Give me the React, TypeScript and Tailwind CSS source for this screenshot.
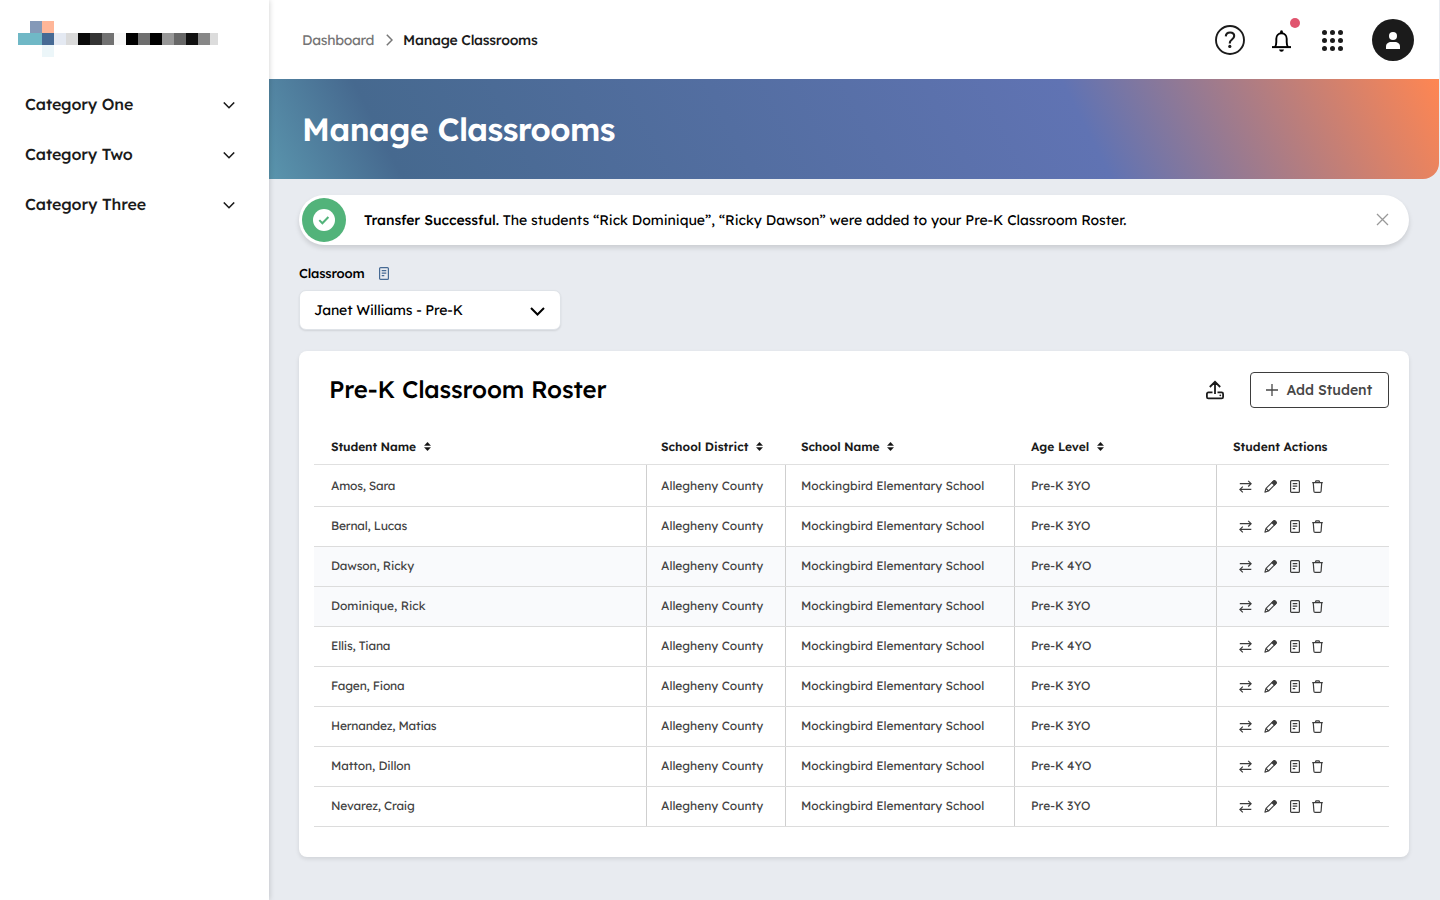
import React from "react";

const logoRow = [
  "bg-[#70b8c6]", "bg-[#70b8c6]", "bg-[#466a94]", "bg-[#e4e9f2]", "bg-[#dadada]", "bg-[#0a0a0a]",
  "bg-[#343434]", "bg-[#717171]", "bg-[#f7f7f7]", "bg-[#000000]", "bg-[#6e6e6e]", "bg-[#000000]",
  "bg-[#979797]", "bg-[#676767]", "bg-[#111111]", "bg-[#878787]",
];

const categories = [
  { label: "Category One", track: "tracking-[-0.15px]" },
  { label: "Category Two", track: "tracking-[-0.15px]" },
  { label: "Category Three", track: "tracking-[-0.12px]" },
];

const students = [
  { name: "Amos, Sara", age: "Pre-K 3YO", track: "tracking-[-0.22px]" },
  { name: "Bernal, Lucas", age: "Pre-K 3YO", track: "tracking-[-0.2px]" },
  { name: "Dawson, Ricky", age: "Pre-K 4YO", track: "tracking-[-0.13px]", added: true },
  { name: "Dominique, Rick", age: "Pre-K 3YO", track: "tracking-normal", added: true },
  { name: "Ellis, Tiana", age: "Pre-K 4YO", track: "tracking-[-0.2px]" },
  { name: "Fagen, Fiona", age: "Pre-K 3YO", track: "tracking-[-0.2px]" },
  { name: "Hernandez, Matias", age: "Pre-K 3YO", track: "tracking-[-0.22px]" },
  { name: "Matton, Dillon", age: "Pre-K 4YO", track: "tracking-[-0.1px]" },
  { name: "Nevarez, Craig", age: "Pre-K 3YO", track: "tracking-[-0.18px]" },
];

const columns = "grid grid-cols-[333px_139px_229px_202px_172px]";

function Logo() {
  return (
    <div className="ml-[18px] mt-[21px] w-[200px]">
      <div className="flex pl-3">
        <div className="size-3 bg-[#8499b8]" />
        <div className="size-3 bg-[#ffb698]" />
      </div>
      <div className="flex">
        {logoRow.map((c, i) => (
          <div key={i} className={"size-3 " + c} />
        ))}
        <div className="h-3 w-2 bg-[#dcdcdc]" />
      </div>
      <div className="ml-6 size-3 bg-[#ecf6f9]" />
    </div>
  );
}

function Chevron() {
  return (
    <svg className="h-[7px] w-[12px]" viewBox="0 0 12 7" fill="none" stroke="#1b1b1b" strokeWidth="1.6">
      <path d="M.8.5 6 5.7 11.2.5" />
    </svg>
  );
}

function Sorter() {
  return (
    <svg className="mb-px h-[9px] w-[7px]" viewBox="0 0 7 9" fill="#111">
      <path d="M3.5.2 6.5 3.5H.5ZM3.5 8.8.5 5.5h6Z" stroke="#111" strokeWidth=".4" strokeLinejoin="round" />
    </svg>
  );
}

function NoteIcon({ color }: { color: string }) {
  return (
    <svg className="h-[13px] w-[10px]" viewBox="0 0 10 13" fill="none" stroke={color}>
      <rect x=".6" y=".6" width="8.8" height="11.8" rx="1" strokeWidth="1.2" />
      <path d="M2.7 3.6h4.6M2.7 6.1h4.6M2.7 8.6h2.6" strokeWidth="1.1" />
    </svg>
  );
}

function SwapIcon() {
  return (
    <svg className="h-[13px] w-[13px]" viewBox="0 0 13 13" fill="none" stroke="#3d3d3d" strokeWidth="1.2">
      <path d="M.8 3.7h11M9.2.8l2.9 2.9-2.9 2.8M12.3 9.4h-11M3.8 6.6.9 9.4l2.9 2.9" />
    </svg>
  );
}

function PencilIcon() {
  return (
    <svg className="h-[13px] w-[13px]" viewBox="0 0 13 13" fill="none" stroke="#3d3d3d" strokeWidth="1.1" strokeLinejoin="round">
      <path d="M.9 12.1 2 8.4 9.4 1.2a1.2 1.2 0 0 1 1.7 0l.7.7a1.2 1.2 0 0 1 0 1.7L4.5 11ZM2.2 8.5l2.2 2.3" />
      <path d="M7.9 2.7 9.6 1a1.1 1.1 0 0 1 1.5 0l.9.9a1.1 1.1 0 0 1 0 1.5l-1.6 1.7Z" fill="#3d3d3d" />
    </svg>
  );
}

function TrashIcon() {
  return (
    <svg className="h-[13px] w-[11px]" viewBox="0 0 11 13" fill="none" stroke="#3d3d3d" strokeWidth="1.2" strokeLinejoin="round">
      <path d="M.2 2.7h10.6M3.3 2.5 4 .8h3l.7 1.7M1.3 2.9l.6 8.3q.1 1.2 1.2 1.2h4.8q1.1 0 1.2-1.2l.6-8.3" />
    </svg>
  );
}

function HeaderCell({ label, pad, track = "", sortable = true }: { label: string; pad: string; track?: string; sortable?: boolean }) {
  return (
    <div className={"flex items-center gap-2 whitespace-nowrap text-[12px] font-semibold text-[#1b1b1b] " + pad}>
      <span className={track}>{label}</span>
      {sortable && <Sorter />}
    </div>
  );
}

export default function App() {
  return (
    <div className="flex h-[900px] w-[1440px] overflow-hidden bg-[#e8ebf0] font-['Lexend','Inter',sans-serif] text-black [text-rendering:geometricPrecision]">
      <aside className="relative z-10 w-[269px] shrink-0 bg-white shadow-[0_0_6px_rgba(0,0,0,0.2)]">
        <Logo />
        <nav className="mt-[23px] flex flex-col">
          {categories.map((c) => (
            <div key={c.label} className="flex h-[50px] items-center justify-between pl-[25px] pr-[34px] text-[16px] font-medium text-[#1b1b1b]">
              <span className={"pb-[2px] " + c.track}>{c.label}</span>
              <Chevron />
            </div>
          ))}
        </nav>
      </aside>

      <main className="w-[1170px] shrink-0">
        <header className="flex h-[79px] items-center bg-white pl-[33px] pr-[25px] pb-px">
          <div className="flex items-center whitespace-nowrap pt-[2px] text-[14px]">
            <span className="w-[72px] tracking-[-0.3px] text-[#747474]">Dashboard</span>
            <svg className="ml-[12px] mr-[10px] h-[12px] w-[7px]" viewBox="0 0 7 12" fill="none" stroke="#777" strokeWidth="1.5">
              <path d="M.8.8 6 6 .8 11.2" />
            </svg>
            <span className="font-medium tracking-[-0.26px] text-[#1b1b1b]">Manage Classrooms</span>
          </div>
          <div className="ml-auto flex items-center pt-[2px]">
            <svg className="size-[30px]" viewBox="0 0 30 30" fill="none" stroke="#1b1b1b" strokeWidth="1.9">
              <circle cx="15" cy="15" r="14" />
              <path d="M10.8 11.4c.1-2.4 1.8-3.9 4.300-3.900 2.400 0 4.100 1.500 4.100 3.600 0 3.400-4.400 3.500-4.400 6.900v.5" strokeWidth="2.1" />
              <circle cx="14.8" cy="21.4" r="1.6" fill="#1b1b1b" stroke="none" />
            </svg>
            <div className="relative ml-[27px] size-[20px]">
              <svg className="h-[22px] w-[19px]" viewBox="0 0 19 22" fill="none" stroke="#000" strokeWidth="1.9" strokeLinejoin="round">
                <path d="M3 17c1.100-1.500 1.300-3 1.300-5V8.800c0-3.300 2.100-5.500 5.200-5.500s5.200 2.200 5.200 5.500V12c0 2 .2 3.500 1.300 5" />
                <path d="M0 17.100h19" strokeWidth="2" />
                <path d="M8 3.300 8.300.8q1.200-1 2.400 0l.3 2.500ZM7 19.400h5q-.5 2.300-2.500 2.300T7 19.400Z" fill="#000" stroke="none" />
              </svg>
              <span className="absolute -top-[12px] left-[18px] size-[10px] rounded-full bg-[#e0546e]" />
            </div>
            <div className="ml-[30px] grid size-[21px] grid-cols-3 gap-[3px]">
              {Array.from({ length: 9 }, (_, i) => (
                <span key={i} className="size-[5px] rounded-full bg-[#1b1b1b]" />
              ))}
            </div>
            <div className="ml-[29px] flex size-[42px] items-center justify-center rounded-full bg-[#1b1b1b]">
              <svg className="h-[17px] w-[14px]" viewBox="0 0 14 17" fill="#fff">
                <circle cx="7" cy="4" r="4" />
                <path d="M0 17v-2.4C0 11.5 2.5 10 5 10h4c2.5 0 5 1.5 5 4.6V17Z" />
              </svg>
            </div>
          </div>
        </header>

        <div className="flex h-[100px] items-center rounded-br-[16px] bg-[linear-gradient(63deg,#5a95ad_0%,#46698f_11%,#6073b3_69%,#ff8652_100%)] pl-[33px]">
          <h1 className="whitespace-nowrap pb-px text-[32px] font-semibold tracking-[-0.55px] text-white">Manage Classrooms</h1>
        </div>

        <div className="px-[30px] pt-4">
          <div className="flex h-[50px] items-center rounded-full bg-white pl-[3px] pr-[20px] shadow-[0_3px_5px_rgba(0,0,0,0.13)]">
            <div className="flex size-[44px] shrink-0 items-center justify-center rounded-full bg-[#52b37a]">
              <svg className="size-[22px]" viewBox="0 0 22 22" fill="none">
                <circle cx="11" cy="11" r="11" fill="#fff" />
                <path d="m6.3 11.1 3.1 3.1 6-6.2" stroke="#52b37a" strokeWidth="2" />
              </svg>
            </div>
            <p className="ml-[18px] whitespace-nowrap text-[14px] tracking-[-0.05px]">
              <span className="font-medium tracking-[-0.08px]">Transfer Successful.</span> The students “Rick Dominique”, “Ricky Dawson” were added to your Pre-K Classroom Roster.
            </p>
            <svg className="mb-px ml-auto size-[13px]" viewBox="0 0 13 13" stroke="#999" strokeWidth="1.3">
              <path d="m1 1 11 11M12 1 1 12" />
            </svg>
          </div>

          <div className="mt-[18px] flex h-5 items-center gap-[15px] text-[13px] font-medium">
            <span className="pt-[3px] tracking-[-0.15px]">Classroom</span>
            <NoteIcon color="#466a94" />
          </div>

          <div className="mt-[7px] flex h-10 w-[262px] items-center justify-between rounded-[7px] border border-[#dfe3e8] bg-white pl-[14px] pr-[15px] shadow-[0_1px_2px_rgba(0,0,0,0.1)]">
            <span className="text-[14px] tracking-[-0.13px]">Janet Williams - Pre-K</span>
            <svg className="mt-[2px] h-[9px] w-[15px]" viewBox="0 0 15 9" fill="none" stroke="#000" strokeWidth="2">
              <path d="m1 1 6.5 6.5L14 1" />
            </svg>
          </div>

          <section className="mt-[21px] h-[506px] rounded-[8px] bg-white px-[15px] pt-[21px] shadow-[0_2px_4px_rgba(0,0,0,0.1)]">
            <div className="flex h-9 items-center pl-[15px] pr-[5px]">
              <h2 className="whitespace-nowrap pb-[2px] text-[24px] font-medium tracking-[-0.13px]">Pre-K Classroom Roster</h2>
              <svg className="ml-auto h-[20px] w-[18px]" viewBox="0 0 18 20" fill="none" stroke="#1b1b1b" strokeWidth="1.8">
                <path d="M9 14V2M3.8 7 9 1.8 14.200 7M6.500 12.400H2.400a1.500 1.500 0 0 0-1.500 1.500v3a1.500 1.500 0 0 0 1.500 1.500h13.200a1.500 1.500 0 0 0 1.500-1.500v-3a1.500 1.500 0 0 0-1.500-1.500H11.500" />
                <circle cx="14.3" cy="15.3" r=".9" fill="#1b1b1b" stroke="none" />
              </svg>
              <button className="ml-[26px] flex h-9 w-[139px] items-center rounded-[4px] border border-[#3d3d3d] pl-[15px] text-[14px] font-medium text-[#474747]">
                <svg className="mr-[8.5px] size-[12px]" viewBox="0 0 12 12" stroke="#474747" strokeWidth="1.3">
                  <path d="M6 0v12M0 6h12" />
                </svg>
                <span className="whitespace-nowrap">Add Student</span>
              </button>
            </div>

            <div className="mt-[22px] w-[1075px]">
              <div className={columns + " h-[35px] border-b border-[#e0e0e0] pb-[1px]"}>
                <HeaderCell label="Student Name" pad="pl-[17px]" track="tracking-[-0.12px]" />
                <HeaderCell label="School District" pad="pl-[14px]" />
                <HeaderCell label="School Name" pad="pl-[15px]" track="tracking-[-0.12px]" />
                <HeaderCell label="Age Level" pad="pl-[16px]" />
                <HeaderCell label="Student Actions" pad="pl-[16px]" sortable={false} />
              </div>
              {students.map((s, i) => (
                <div
                  key={s.name}
                  className={
                    columns + " border-b border-[#dcdcdc] text-[12px] leading-4 text-[#424242] " +
                    (i === 0 ? "h-[42px] *:pt-[2px] " : "h-10 ") + (s.added ? "bg-[#f9fafc]" : "")
                  }
                >
                  <div className={"flex items-center border-r border-[#cfcfcf] pb-px pl-[17px] " + s.track}>{s.name}</div>
                  <div className="flex items-center border-r border-[#cfcfcf] pb-px pl-[14px]">Allegheny County</div>
                  <div className="flex items-center border-r border-[#cfcfcf] pb-px pl-[15px] tracking-[-0.04px]">Mockingbird Elementary School</div>
                  <div className="flex items-center border-r border-[#cfcfcf] pb-px pl-[16px]">{s.age}</div>
                  <div className="flex items-center pl-[21.5px]">
                    <SwapIcon />
                    <span className="ml-[12.5px] flex"><PencilIcon /></span>
                    <span className="ml-[12.5px] flex"><NoteIcon color="#3d3d3d" /></span>
                    <span className="ml-[12.5px] flex"><TrashIcon /></span>
                  </div>
                </div>
              ))}
            </div>
          </section>
        </div>
      </main>
    </div>
  );
}
